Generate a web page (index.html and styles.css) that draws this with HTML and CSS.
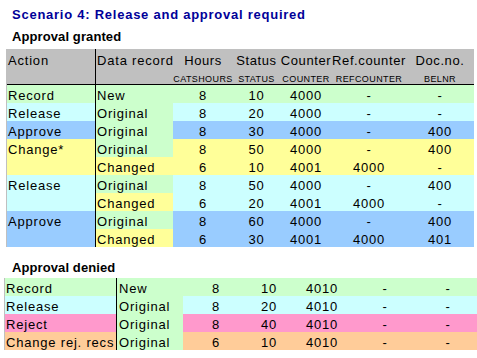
FILE: index.html
```html
<!DOCTYPE html>
<html>
<head>
<meta charset="utf-8">
<link rel="stylesheet" href="styles.css">
</head>
<body>
<h1 class="title">Scenario 4: Release and approval required</h1>
<h2 class="section">Approval granted</h2>
<table class="grid grid1">
  <colgroup>
    <col class="c1-act"><col class="c1-dat"><col class="c1-hrs"><col class="c1-sta"><col class="c1-cnt"><col class="c1-ref"><col class="c1-doc">
  </colgroup>
  <thead>
    <tr class="h1">
      <th class="act" rowspan="2">Action</th>
      <th class="dat" rowspan="2">Data record</th>
      <th>Hours</th><th>Status</th><th>Counter</th><th>Ref.counter</th><th>Doc.no.</th>
    </tr>
    <tr class="h2">
      <th class="tech">CATSHOURS</th><th class="tech">STATUS</th><th class="tech">COUNTER</th><th class="tech">REFCOUNTER</th><th class="tech">BELNR</th>
    </tr>
  </thead>
  <tbody>
    <tr class="r green"><td class="act">Record</td><td class="dat new">New</td><td>8</td><td>10</td><td>4000</td><td>-</td><td>-</td></tr>
    <tr class="r cyan"><td class="act">Release</td><td class="dat orig">Original</td><td>8</td><td>20</td><td>4000</td><td>-</td><td>-</td></tr>
    <tr class="r blue"><td class="act">Approve</td><td class="dat orig">Original</td><td>8</td><td>30</td><td>4000</td><td>-</td><td>400</td></tr>
    <tr class="r yellow"><td class="act" rowspan="2">Change*</td><td class="dat orig">Original</td><td>8</td><td>50</td><td>4000</td><td>-</td><td>400</td></tr>
    <tr class="r yellow"><td class="dat chg">Changed</td><td>6</td><td>10</td><td>4001</td><td>4000</td><td>-</td></tr>
    <tr class="r cyan"><td class="act" rowspan="2">Release</td><td class="dat orig">Original</td><td>8</td><td>50</td><td>4000</td><td>-</td><td>400</td></tr>
    <tr class="r cyan"><td class="dat chg">Changed</td><td>6</td><td>20</td><td>4001</td><td>4000</td><td>-</td></tr>
    <tr class="r blue"><td class="act" rowspan="2">Approve</td><td class="dat orig">Original</td><td>8</td><td>60</td><td>4000</td><td>-</td><td>400</td></tr>
    <tr class="r blue"><td class="dat chg">Changed</td><td>6</td><td>30</td><td>4001</td><td>4000</td><td>401</td></tr>
  </tbody>
</table>
<h2 class="section section2">Approval denied</h2>
<table class="grid grid2">
  <colgroup>
    <col class="c2-act"><col class="c2-dat"><col class="c2-hrs"><col class="c2-sta"><col class="c2-cnt"><col class="c2-ref"><col class="c2-doc">
  </colgroup>
  <tbody>
    <tr class="r green"><td class="act">Record</td><td class="dat new">New</td><td>8</td><td>10</td><td>4010</td><td>-</td><td class="doc2">-</td></tr>
    <tr class="r cyan"><td class="act">Release</td><td class="dat orig">Original</td><td>8</td><td>20</td><td>4010</td><td>-</td><td class="doc2">-</td></tr>
    <tr class="r pink"><td class="act">Reject</td><td class="dat orig">Original</td><td>8</td><td>40</td><td>4010</td><td>-</td><td class="doc2">-</td></tr>
    <tr class="r orange"><td class="act">Change rej. recs</td><td class="dat orig">Original</td><td>6</td><td>10</td><td>4010</td><td>-</td><td class="doc2">-</td></tr>
  </tbody>
</table>
</body>
</html>
```
FILE: styles.css
```css
* { box-sizing: border-box; }

html, body { background: #ffffff; }

body {
  margin: 0;
  padding: 7px 0 0 0;
  font-family: "Liberation Sans", Arial, sans-serif;
  color: #000000;
}

.title {
  margin: 0 0 0 12px;
  font-size: 13px;
  font-weight: bold;
  line-height: 16px;
  letter-spacing: 0.75px;
  color: #000099;
}

.section {
  margin: 6px 0 0 12px;
  font-size: 13px;
  font-weight: bold;
  line-height: 16px;
  letter-spacing: 0.1px;
  color: #000000;
}

.section2 { margin-top: 13px; }

.grid {
  border-collapse: separate;
  border-spacing: 0;
  table-layout: fixed;
  border-left: 1px solid #c0c0c0;
  font-size: 13px;
  letter-spacing: 0.8px;
}

.grid1 { width: 468px; margin: 4px 0 0 6px; }
.grid2 { width: 473px; margin: 2px 0 0 4px; }

.grid td, .grid th {
  padding: 3px 0 0 0;
  line-height: 15px;
  text-align: center;
  vertical-align: top;
  white-space: nowrap;
  font-weight: normal;
}

.grid .act { text-align: left; padding-left: 1px; }
.grid .dat { text-align: left; padding-left: 1px; border-left: 1px solid #000000; }
.grid2 .dat { padding-left: 2px; }
.grid .doc2 { padding-left: 4px; }

/* column widths, table 1 */
.c1-act { width: 88px; }
.c1-dat { width: 78px; }
.c1-hrs { width: 60px; }
.c1-sta { width: 47px; }
.c1-cnt { width: 52px; }
.c1-ref { width: 74px; }
.c1-doc { width: 68px; }

/* column widths, table 2 */
.c2-act { width: 111px; }
.c2-dat { width: 67px; }
.c2-hrs { width: 66px; }
.c2-sta { width: 40px; }
.c2-cnt { width: 66px; }
.c2-ref { width: 60px; }
.c2-doc { width: 62px; }

/* header */
.grid thead th { background: #c0c0c0; }
.grid tr.h1 { height: 21px; }
.grid tr.h1 th { padding-top: 4px; }
.grid tr.h1 th:not(.act):not(.dat) { letter-spacing: 0.6px; }
.grid tr.h2 { height: 15px; }
.grid thead .act, .grid thead .dat, .grid tr.h2 th { border-bottom: 1px solid #000000; }
.grid th.tech {
  font-size: 9px;
  line-height: 10px;
  letter-spacing: 0.4px;
  padding-top: 4px;
}

/* body rows */
.grid tr.r { height: 18px; }

.green td { background: #ccffcc; }
.cyan td { background: #ccffff; }
.blue td { background: #99ccff; }
.yellow td { background: #ffff99; }
.pink td { background: #ff99cc; }
.orange td { background: #ffcc99; }

.grid td.new, .grid td.orig { background: #ccffcc; }
.grid td.chg { background: #ffff99; }
```
